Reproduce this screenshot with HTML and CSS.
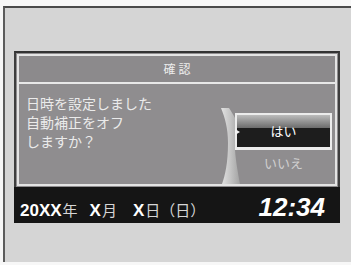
FILE: index.html
```html
<!DOCTYPE html>
<html lang="ja">
<head>
<meta charset="utf-8">
<link rel="stylesheet" href="styles.css">
</head>
<body>
<div class="frame">
  <div class="dialog">
    <div class="panel">
      <div class="box">
        <div class="title">確認</div>
        <div class="body">
          <div class="message">日時を設定しました<br>自動補正をオフ<br>しますか？</div>
          <div class="choices">
            <svg class="arc" width="15" height="76" viewBox="0 0 15 76">
              <defs>
                <linearGradient id="arcg" x1="0" y1="0" x2="1" y2="0">
                  <stop offset="0" stop-color="#e2e2e2"/>
                  <stop offset="0.5" stop-color="#c4c4c4"/>
                  <stop offset="1" stop-color="#a2a2a2"/>
                </linearGradient>
              </defs>
              <path d="M1,0 C5,10 8,20 8,35 C8,55 5,68 2,76 L20,76 C18,65 16,55 15,42 L15,10 C13,6 11,3 9,0 Z" fill="url(#arcg)"/>
            </svg>
            <div class="buttons">
              <div class="btn selected"><span class="pointer"></span>はい</div>
              <div class="btn">いいえ</div>
            </div>
          </div>
        </div>
      </div>
    </div>
    <div class="bar">
      <div class="date"><span class="num">20XX</span><span class="kanji">年</span><span class="num gap1">X</span><span class="kanji">月</span><span class="num gap2">X</span><span class="kanji">日（日）</span></div>
      <div class="time">12:34</div>
    </div>
  </div>
</div>
</body>
</html>
```
FILE: styles.css
```css
html, body {
  margin: 0;
  padding: 0;
}
body {
  width: 351px;
  height: 265px;
  overflow: hidden;
  background: #f7f7f7;
  font-family: "Noto Sans CJK JP", "Liberation Sans", sans-serif;
}
.frame {
  margin: 6px 0 0 3px;
  height: 256px;
  border-top: 2px solid #4a4a4a;
  border-left: 2px solid #5c5c5c;
  background: #d5d5d5;
  padding-top: 43px;
  box-sizing: border-box;
}
.dialog {
  margin-left: 9px;
  width: 326px;
}
.panel {
  border-top: 2px solid #333;
  border-left: 2px solid #3e3e3e;
  border-right: 2px solid #3e3e3e;
  padding: 1px;
  background: #8f8d8f;
}
.box {
  border: 2px solid #e4e4e4;
}
.title {
  height: 26px;
  line-height: 26px;
  text-align: center;
  font-size: 12px;
  letter-spacing: 3px;
  padding-left: 3px;
  color: #ededed;
  background: #8c8a8c;
  border-bottom: 2px solid #e8e8e8;
}
.body {
  height: 100px;
  display: flex;
}
.message {
  flex: 1;
  padding: 10px 0 0 7px;
  font-size: 14px;
  line-height: 19px;
  color: #ebebeb;
}
.choices {
  width: 115px;
  display: flex;
}
.arc {
  align-self: flex-end;
  overflow: visible;
  flex: none;
}
.buttons {
  width: 97px;
  margin-right: 3px;
  padding-top: 29px;
  position: relative;
}
.btn {
  text-align: center;
  font-size: 13px;
  height: 26px;
  line-height: 26px;
  color: #cfcfcf;
}
.btn.selected {
  position: relative;
  height: 37px;
  box-sizing: border-box;
  border: 2px solid #ececec;
  border-bottom-width: 3px;
  line-height: 32px;
  color: #fff;
  background: linear-gradient(to bottom, #bcbcbc 0, #6c6c6c 13px, #1d1d1d 13px, #1d1d1d 100%);
}
.pointer {
  position: absolute;
  left: -2px;
  top: 14px;
  width: 0;
  height: 0;
  border-top: 3px solid transparent;
  border-bottom: 3px solid transparent;
  border-left: 5px solid #f2f2f2;
}
.bar {
  height: 36px;
  box-sizing: border-box;
  background: #151515;
  display: flex;
  justify-content: space-between;
  align-items: baseline;
  padding: 7px 15px 0 6px;
}
.date {
  color: #fff;
  display: flex;
  align-items: baseline;
}
.num {
  font-family: "Liberation Sans", sans-serif;
  font-weight: bold;
  font-size: 17px;
}
.gap1 {
  margin-left: 12px;
}
.gap2 {
  margin-left: 16px;
}
.kanji {
  font-family: "Noto Sans CJK JP", sans-serif;
  font-size: 15px;
  color: #d6d6d6;
  margin-left: 1px;
}
.time {
  font-family: "Liberation Sans", sans-serif;
  font-weight: bold;
  font-style: italic;
  font-size: 26px;
  line-height: 26px;
  color: #fff;
}
```
